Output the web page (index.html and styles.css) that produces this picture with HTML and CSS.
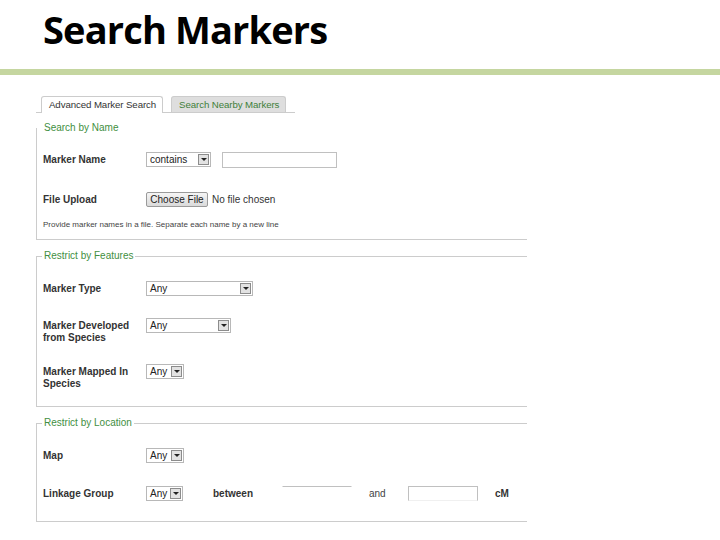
FILE: index.html
```html
<!DOCTYPE html>
<html lang="en">
<head>
<meta charset="utf-8">
<title>Search Markers</title>
<link rel="stylesheet" href="styles.css">
</head>
<body>
<h1 class="title">Search Markers</h1>
<div class="rule"></div>

<div class="tabs">
  <div class="tab tab-active">Advanced Marker Search</div>
  <div class="tab">Search Nearby Markers</div>
</div>

<form class="search-form">
  <fieldset class="group group-name">
    <legend>Search by Name</legend>
    <div class="row row-name">
      <div class="label">Marker Name</div>
      <div class="select w-contains"><span class="select-text">contains</span><span class="arrow"></span></div>
      <input class="text-input name-input" type="text">
    </div>
    <div class="row row-file">
      <div class="label">File Upload</div>
      <button class="file-btn" type="button">Choose File</button>
      <span class="file-status">No file chosen</span>
    </div>
    <div class="help">Provide marker names in a file. Separate each name by a new line</div>
  </fieldset>

  <fieldset class="group group-features">
    <legend>Restrict by Features</legend>
    <div class="row row-type">
      <div class="label">Marker Type</div>
      <div class="select w-type"><span class="select-text">Any</span><span class="arrow"></span></div>
    </div>
    <div class="row row-dev">
      <div class="label">Marker Developed<br>from Species</div>
      <div class="select w-dev"><span class="select-text">Any</span><span class="arrow"></span></div>
    </div>
    <div class="row row-mapped">
      <div class="label">Marker Mapped In<br>Species</div>
      <div class="select w-any"><span class="select-text">Any</span><span class="arrow"></span></div>
    </div>
  </fieldset>

  <fieldset class="group group-location">
    <legend>Restrict by Location</legend>
    <div class="row row-map">
      <div class="label">Map</div>
      <div class="select w-any"><span class="select-text">Any</span><span class="arrow"></span></div>
    </div>
    <div class="row row-linkage">
      <div class="label">Linkage Group</div>
      <div class="select w-linkage"><span class="select-text">Any</span><span class="arrow"></span></div>
      <div class="range-word range-between">between</div>
      <input class="text-input range-input range-from" type="text">
      <div class="range-word range-and">and</div>
      <input class="text-input range-input range-to" type="text">
      <div class="range-word range-unit">cM</div>
    </div>
  </fieldset>
</form>
</body>
</html>
```

FILE: styles.css
```css
* { box-sizing: border-box; }

body {
  margin: 0;
  background: #fff;
  font-family: "Liberation Sans", Arial, sans-serif;
  font-size: 10px;
  color: #333;
}

.title {
  margin: 0;
  padding: 6px 0 0 43px;
  font-family: "Open Sans", "Liberation Sans", sans-serif;
  font-weight: 700;
  font-size: 38px;
  line-height: 46px;
  letter-spacing: -0.85px;
  color: #000;
}

.rule {
  margin-top: 17px;
  height: 6px;
  background: #c5d6a0;
}

.tabs {
  display: flex;
  align-items: flex-end;
  gap: 8px;
  margin: 21px 0 0 36px;
  width: 259px;
  height: 17px;
  padding-left: 5px;
  border-bottom: 1px solid #ccc;
}

.tab {
  height: 16px;
  padding: 0 6px 0 7px;
  font-size: 9.7px;
  line-height: 15px;
  border: 1px solid #ccc;
  border-bottom: none;
  border-radius: 3px 3px 0 0;
  background: #dedede;
  color: #3f7f3a;
  letter-spacing: -0.1px;
  white-space: nowrap;
}

.tab-active {
  height: 17px;
  margin-bottom: -1px;
  background: #fff;
  color: #333;
}

.search-form { margin: 0; }

.group {
  margin: 10px 0 0 36px;
  width: 491px;
  min-width: 0;
  border: 1px solid #ccc;
  border-right: none;
  padding: 0 0 0 6px;
}

.group legend {
  margin-left: -1px;
  padding: 0 2px;
  font-size: 10px;
  line-height: 12px;
  color: #3f8f3f;
}

.group-name {
  margin-top: 9px;
  border-top: none;
  padding-bottom: 8px;
}

.group-features { padding-bottom: 16px; }
.group-location { padding-bottom: 20px; }

.row {
  display: flex;
  align-items: flex-start;
}

.row-name { margin-top: 18px; }
.row-file { margin-top: 24px; }
.row-type { margin-top: 19px; }
.row-dev { margin-top: 22px; }
.row-mapped { margin-top: 20px; }
.row-map { margin-top: 19px; }
.row-linkage { margin-top: 23px; }

.label {
  flex: none;
  width: 103px;
  margin-top: 2px;
  font-weight: 700;
  line-height: 12px;
  color: #333;
}

.select {
  flex: none;
  display: flex;
  align-items: center;
  height: 15px;
  border: 1px solid #b8b8b8;
  background: #fff;
  padding-left: 3px;
}

.select-text {
  flex: 1;
  line-height: 13px;
  color: #222;
  white-space: nowrap;
}

.arrow {
  flex: none;
  display: flex;
  align-items: center;
  justify-content: center;
  width: 11px;
  height: 11px;
  margin-right: 1px;
  border: 1px solid #8c8c8c;
  background: #e2e2e2;
}

.arrow::before {
  content: "";
  border-left: 3px solid transparent;
  border-right: 3px solid transparent;
  border-top: 3px solid #222;
}

.w-contains { width: 65px; }
.w-type { width: 107px; }
.w-dev { width: 85px; }
.w-any { width: 38px; }
.w-linkage { width: 37px; }

.text-input {
  flex: none;
  height: 16px;
  padding: 0;
  border: 1px solid #c0c0c0;
  background: #fff;
  font: inherit;
}

.name-input {
  width: 115px;
  margin-left: 11px;
}

.file-btn {
  flex: none;
  width: 62px;
  height: 15px;
  padding: 0;
  border: 1px solid #9a9a9a;
  border-radius: 2px;
  background: linear-gradient(#f5f5f5, #dadada);
  font-family: "Liberation Sans", Arial, sans-serif;
  font-size: 10px;
  line-height: 13px;
  color: #222;
}

.file-status {
  margin-left: 4px;
  line-height: 15px;
  color: #333;
}

.help {
  margin-top: 12px;
  font-size: 8px;
  line-height: 12px;
  color: #444;
}

.range-word {
  flex: none;
  margin-top: 2px;
  line-height: 12px;
  font-weight: 700;
  color: #333;
}

.range-between {
  width: 69px;
  margin-left: 30px;
}

.range-and {
  width: 56px;
  padding-left: 17px;
  font-weight: 400;
  color: #444;
}

.range-unit { margin-left: 17px; }

.range-input {
  width: 70px;
  height: 15px;
}

.range-from {
  border-color: #c0c0c0 #fff #fff #fff;
}

.range-to {
  border-color: #c0c0c0 #c0c0c0 #f0f0f0 #c0c0c0;
}
```
